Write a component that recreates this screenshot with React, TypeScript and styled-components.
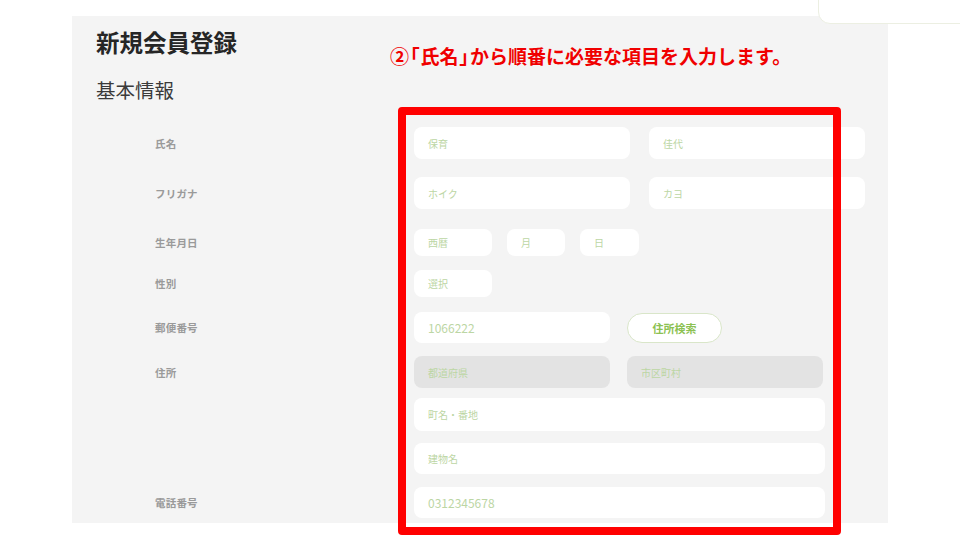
import React from "react";
import styled, { createGlobalStyle } from "styled-components";

const Global = createGlobalStyle`
  html, body { margin: 0; padding: 0; background: #ffffff; }
  body { font-family: "Noto Sans CJK JP", "Noto Sans", sans-serif; }
  * { box-sizing: border-box; }
`;

const Page = styled.div`
  position: relative;
  width: 960px;
  height: 540px;
  overflow: hidden;
  background: #fff;
  padding-top: 16px;
`;

const Panel = styled.section`
  margin-left: 72px;
  width: 816px;
  height: 507px;
  background: #f4f4f4;
  padding: 10px 0 0 24px;
  display: flex;
  flex-direction: column;
`;

const Title = styled.h1`
  margin: 0;
  font-size: 23.5px;
  line-height: 32px;
  font-weight: 700;
  color: #262626;
`;

const SubTitle = styled.h2`
  margin: 18px 0 0;
  font-size: 19.5px;
  line-height: 28px;
  font-weight: 400;
  color: #3a3a3a;
`;

const Form = styled.div`
  margin-top: 23px;
  display: flex;
  flex-direction: column;
`;

const Row = styled.div<{ $mt: number; $h: number }>`
  display: grid;
  grid-template-columns: 318px 1fr;
  align-items: center;
  margin-top: ${(p) => p.$mt}px;
  height: ${(p) => p.$h}px;
`;

const Label = styled.div`
  padding-left: 59px;
  font-size: 10.5px;
  font-weight: 700;
  color: #9a9a9a;
  letter-spacing: 0.2px;
`;

const Fields = styled.div<{ $gap: number }>`
  display: flex;
  gap: ${(p) => p.$gap}px;
  height: 100%;
`;

const Field = styled.div<{ $w: number; $gray?: boolean; $num?: boolean }>`
  width: ${(p) => p.$w}px;
  height: 100%;
  border-radius: 8px;
  background: ${(p) => (p.$gray ? "#e3e3e3" : "#ffffff")};
  display: flex;
  align-items: center;
  padding-left: 14px;
  font-size: ${(p) => (p.$num ? "12px" : "10px")};
  color: #bcd6a4;
`;

const SearchButton = styled.button`
  width: 95px;
  height: 30px;
  margin-top: 1px;
  border-radius: 15px;
  border: 1px solid #d9e6c9;
  background: #ffffff;
  font-family: inherit;
  font-size: 11px;
  font-weight: 700;
  color: #8cc152;
  padding: 0;
`;

const Annotation = styled.div`
  position: absolute;
  left: 390px;
  top: 43px;
  font-size: 19px;
  line-height: 26px;
  font-weight: 700;
  color: #f00000;
  letter-spacing: 0px;
  white-space: nowrap;
`;

const Bracket = styled.span`
  font-feature-settings: "palt";
  margin: 0 1px;
`;

const Highlight = styled.div`
  position: absolute;
  left: 398px;
  top: 107px;
  width: 443px;
  height: 428px;
  border: 8px solid #ff0000;
  border-radius: 4px;
  pointer-events: none;
`;

const CornerTab = styled.div`
  position: absolute;
  left: 818px;
  top: -20px;
  width: 220px;
  height: 44px;
  background: #ffffff;
  border: 1px solid #ecefe2;
  border-radius: 12px;
`;

export default function App() {
  return (
    <>
      <Global />
      <Page>
        <Panel>
          <Title>新規会員登録</Title>
          <SubTitle>基本情報</SubTitle>
          <Form>
            <Row $mt={0} $h={32}>
              <Label>氏名</Label>
              <Fields $gap={19}>
                <Field $w={216}>保育</Field>
                <Field $w={216}>佳代</Field>
              </Fields>
            </Row>
            <Row $mt={18} $h={32}>
              <Label>フリガナ</Label>
              <Fields $gap={19}>
                <Field $w={216}>ホイク</Field>
                <Field $w={216}>カヨ</Field>
              </Fields>
            </Row>
            <Row $mt={20} $h={27}>
              <Label>生年月日</Label>
              <Fields $gap={15}>
                <Field $w={78}>西暦</Field>
                <Field $w={58}>月</Field>
                <Field $w={59}>日</Field>
              </Fields>
            </Row>
            <Row $mt={14} $h={27}>
              <Label>性別</Label>
              <Fields $gap={0}>
                <Field $w={78}>選択</Field>
              </Fields>
            </Row>
            <Row $mt={15} $h={31}>
              <Label>郵便番号</Label>
              <Fields $gap={17}>
                <Field $w={196} $num>1066222</Field>
                <SearchButton>住所検索</SearchButton>
              </Fields>
            </Row>
            <Row $mt={13} $h={32}>
              <Label>住所</Label>
              <Fields $gap={17}>
                <Field $w={196} $gray>都道府県</Field>
                <Field $w={196} $gray>市区町村</Field>
              </Fields>
            </Row>
            <Row $mt={10} $h={33}>
              <Label />
              <Fields $gap={0}>
                <Field $w={411}>町名・番地</Field>
              </Fields>
            </Row>
            <Row $mt={12} $h={31}>
              <Label />
              <Fields $gap={0}>
                <Field $w={411}>建物名</Field>
              </Fields>
            </Row>
            <Row $mt={13} $h={31}>
              <Label>電話番号</Label>
              <Fields $gap={0}>
                <Field $w={411} $num>0312345678</Field>
              </Fields>
            </Row>
          </Form>
        </Panel>
        <CornerTab />
        <Annotation>
          ②<Bracket>「</Bracket>氏名<Bracket>」</Bracket>から順番に必要な項目を入力します。
        </Annotation>
        <Highlight />
      </Page>
    </>
  );
}
